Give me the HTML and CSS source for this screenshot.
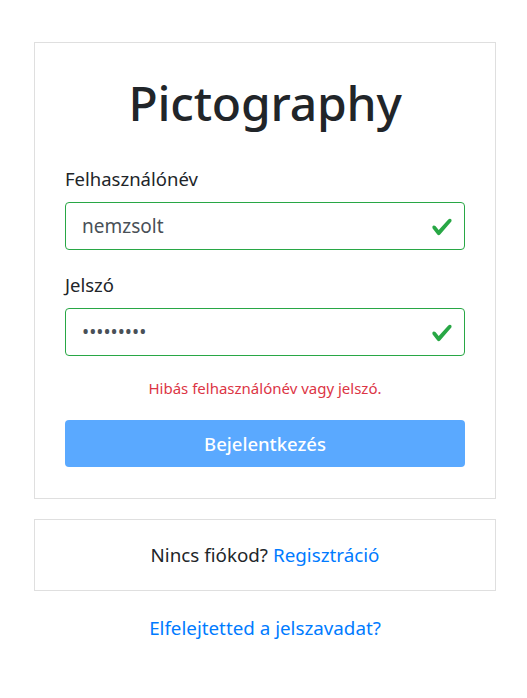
FILE: index.html
```html
<!DOCTYPE html>
<html lang="hu">
<head>
<meta charset="utf-8">
<title>Pictography</title>
<link rel="stylesheet" href="styles.css">
</head>
<body>
<main class="wrap">
  <section class="card login">
    <h1 class="title">Pictography</h1>
    <form class="form">
      <label class="label" for="u">Felhasználónév</label>
      <div class="field">
        <input class="input" id="u" type="text" value="nemzsolt">
        <svg class="ok" viewBox="0 0 8 8" aria-hidden="true"><path fill="#28a745" d="M2.3 6.73L.6 4.53c-.4-1.040.46-1.4 1.1-.8l1.1 1.4 3.4-3.8c.6-.63 1.6-.27 1.2.7l-4 4.6c-.43.5-.8.4-1.1.1z"/></svg>
      </div>
      <label class="label second" for="p">Jelszó</label>
      <div class="field">
        <input class="input" id="p" type="password" value="123456789">
        <svg class="ok" viewBox="0 0 8 8" aria-hidden="true"><path fill="#28a745" d="M2.3 6.73L.6 4.53c-.4-1.04.46-1.4 1.1-.8l1.1 1.4 3.4-3.8c.6-.63 1.6-.27 1.2.7l-4 4.6c-.43.5-.8.4-1.1.1z"/></svg>
      </div>
      <p class="error">Hibás felhasználónév vagy jelszó.</p>
      <button class="btn" type="button" disabled>Bejelentkezés</button>
    </form>
  </section>
  <section class="card signup">
    Nincs fiókod? <a class="link" href="#">Regisztráció</a>
  </section>
  <p class="forgot"><a class="link" href="#">Elfelejtetted a jelszavadat?</a></p>
</main>
</body>
</html>
```

FILE: styles.css
```css
* { box-sizing: border-box; }
html, body { margin: 0; padding: 0; background: #fff; }
body {
  font-family: "Noto Sans", "Open Sans", sans-serif;
  color: #212529;
  font-size: 16px;
}
.wrap {
  width: 462px;
  margin: 42px 0 0 34px;
  display: flex;
  flex-direction: column;
}
.card {
  border: 1px solid #dfdfdf;
  background: #fff;
}
.login {
  padding: 25px 30px 31px;
}
.title {
  margin: 0;
  text-align: center;
  font-size: 48px;
  font-weight: 500;
  line-height: 70px;
  letter-spacing: -0.2px;
  color: #212529;
}
.form {
  display: flex;
  flex-direction: column;
  margin-top: 29px;
}
.label {
  font-size: 18.5px;
  font-weight: 400;
  line-height: 24px;
  margin-bottom: 11px;
}
.label.second { margin-top: 23px; }
.field { position: relative; }
.input {
  display: block;
  width: 100%;
  height: 48px;
  border: 1px solid #28a745;
  border-radius: 4px;
  padding: 0 48px 0 16px;
  font-family: inherit;
  font-size: 19px;
  color: #495057;
  background: #fff;
  outline: none;
}
.ok {
  position: absolute;
  right: 12px;
  top: 14px;
  width: 22px;
  height: 22px;
}
.error {
  margin: 22px 0 0;
  text-align: center;
  color: #dc3545;
  font-size: 15px;
  line-height: 20px;
}
.btn {
  margin-top: 22px;
  height: 47px;
  border: 0;
  border-radius: 4px;
  background: #5aa9ff;
  color: #fff;
  font-family: inherit;
  font-size: 18.5px;
  font-weight: 500;
  cursor: default;
}
.signup {
  margin-top: 20px;
  height: 72px;
  display: flex;
  align-items: center;
  justify-content: center;
  gap: 5px;
  font-size: 18.8px;
}
.link { color: #007bff; text-decoration: none; }
.forgot {
  margin: 24px 0 0;
  text-align: center;
  font-size: 18.8px;
  line-height: 26px;
}
```
